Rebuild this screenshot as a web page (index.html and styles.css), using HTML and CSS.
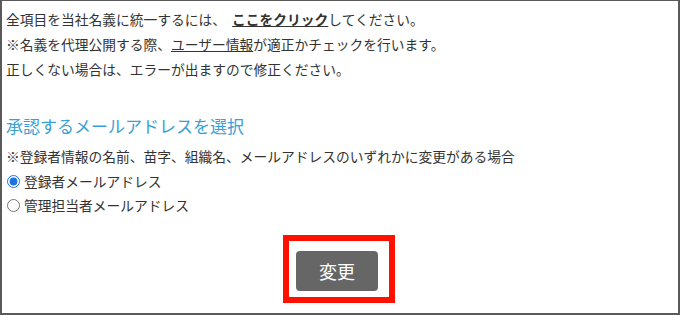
FILE: index.html
```html
<!DOCTYPE html>
<html lang="ja">
<head>
    <meta charset="UTF-8">
    <meta name="viewport" content="width=device-width, initial-scale=1.0">
    <title>承認メールアドレス</title>
    <link rel="stylesheet" href="styles.css">
</head>
<body>
    <div class="frame">
        <div class="notes">
            <p>全項目を当社名義に統一するには、 <a href="#" class="strong-link">ここをクリック</a>してください。</p>
            <p>※名義を代理公開する際、<a href="#" class="link">ユーザー情報</a>が適正かチェックを行います。</p>
            <p>正しくない場合は、エラーが出ますので修正ください。</p>
        </div>

        <h2 class="heading">承認するメールアドレスを選択</h2>
        <p class="hint">※登録者情報の名前、苗字、組織名、メールアドレスのいずれかに変更がある場合</p>
        <label class="option"><input type="radio" name="mail" checked>登録者メールアドレス</label>
        <label class="option"><input type="radio" name="mail">管理担当者メールアドレス</label>

        <div class="actions">
            <div class="highlight">
                <button class="submit">変更</button>
            </div>
        </div>
    </div>
</body>
</html>
```

FILE: styles.css
```css
* {
    box-sizing: border-box;
}

body {
    margin: 0;
    background-color: #ffffff;
    color: #333333;
    font-family: "Noto Sans CJK JP", "Noto Sans", sans-serif;
    font-size: 13.75px;
}

.frame {
    width: 680px;
    height: 315px;
    border: 2px solid #5a5a5a;
    border-top-width: 1px;
    padding: 6px 6px 0 4px;
}

p {
    margin: 0;
    line-height: 25px;
}

.strong-link {
    color: #333333;
    font-weight: bold;
    text-decoration: underline;
    margin-left: 3px;
}

.link {
    color: #333333;
    text-decoration: underline;
}

.heading {
    margin: 31px 0 0 0;
    font-size: 17px;
    font-weight: normal;
    line-height: 25px;
    color: #3a9fd4;
}

.hint {
    margin-top: 6px;
}

.option {
    display: flex;
    align-items: center;
    height: 24px;
    margin-left: -3px;
}

.option input {
    margin: 0 4px 0 4px;
    width: 13px;
    height: 13px;
    accent-color: #1f73e0;
}

.actions {
    display: flex;
    justify-content: center;
    margin-top: 18px;
}

.highlight {
    border: 6px solid #ff1100;
    padding: 10px 11px 6px 7px;
}

.submit {
    display: block;
    width: 82px;
    height: 40px;
    border: none;
    border-radius: 4px;
    background-color: #666666;
    color: #ffffff;
    font-family: "Noto Sans CJK JP", sans-serif;
    font-size: 18px;
    cursor: pointer;
}
```
